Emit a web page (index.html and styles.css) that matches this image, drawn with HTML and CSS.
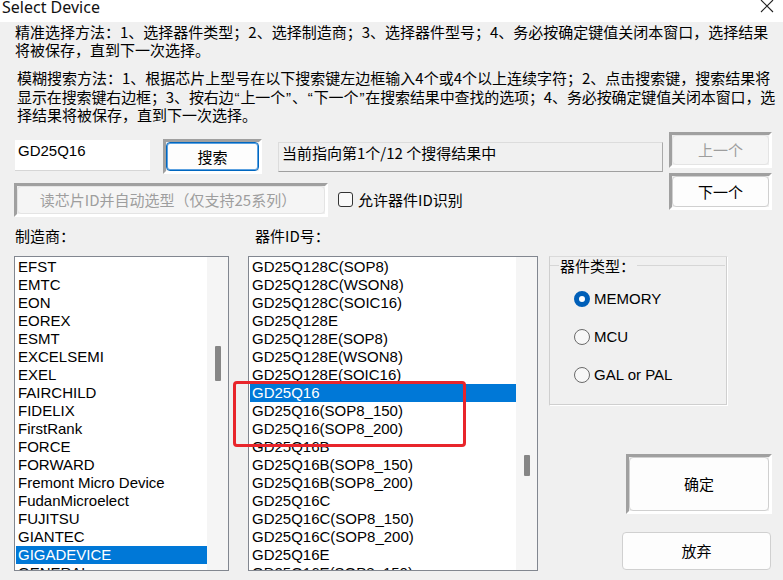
FILE: index.html
```html
<!DOCTYPE html>
<html lang="zh-CN">
<head>
<meta charset="utf-8">
<title>Select Device</title>
<link rel="stylesheet" href="styles.css">
</head>
<body>
<div class="window">
  <div class="titlebar">
    <span class="title">Select Device</span>
    <svg class="close" width="14" height="14" viewBox="0 0 14 14"><path d="M1 1 L13 13 M13 1 L1 13" stroke="#222" stroke-width="1.1" fill="none"/></svg>
  </div>
  <div class="main">
    <p class="intro intro1">
      <span class="line">精准选择方法：1、选择器件类型；2、选择制造商；3、选择器件型号；4、务必按确定键值关闭本窗口，选择结果</span>
      <span class="line">将被保存，直到下一次选择。</span>
    </p>
    <p class="intro intro2">
      <span class="line">模糊搜索方法：1、根据芯片上型号在以下搜索键左边框输入4个或4个以上连续字符；2、点击搜索键，搜索结果将</span>
      <span class="line tight">显示在搜索键右边框；3、按右边<span class="q">“</span>上一个<span class="q">”</span>、<span class="q">“</span>下一个<span class="q">”</span>在搜索结果中查找的选项；4、务必按确定键值关闭本窗口，选</span>
      <span class="line">择结果将被保存，直到下一次选择。</span>
    </p>
    <div class="controls">
      <div class="ctl-left">
        <div class="row-search">
          <div class="textbox">GD25Q16</div>
          <div class="frame frame-search"><button class="btn btn-focus">搜索</button></div>
          <div class="status">当前指向第1个/12 个搜得结果中</div>
        </div>
        <div class="row-read">
          <div class="frame frame-read"><button class="btn btn-disabled">读芯片ID并自动选型（仅支持25系列）</button></div>
          <label class="check"><span class="box"></span><span class="check-text">允许器件ID识别</span></label>
        </div>
      </div>
      <div class="ctl-right">
        <div class="frame frame-prev"><button class="btn btn-disabled">上一个</button></div>
        <div class="frame frame-next"><button class="btn">下一个</button></div>
      </div>
    </div>
    <div class="labels">
      <span class="lbl-maker">制造商：</span>
      <span class="lbl-id">器件ID号：</span>
    </div>
    <div class="lists">
      <div class="listbox list-maker">
        <ul class="items">
          <li>EFST</li>
          <li>EMTC</li>
          <li>EON</li>
          <li>EOREX</li>
          <li>ESMT</li>
          <li>EXCELSEMI</li>
          <li>EXEL</li>
          <li>FAIRCHILD</li>
          <li>FIDELIX</li>
          <li>FirstRank</li>
          <li>FORCE</li>
          <li>FORWARD</li>
          <li>Fremont Micro Device</li>
          <li>FudanMicroelect</li>
          <li>FUJITSU</li>
          <li>GIANTEC</li>
          <li class="sel">GIGADEVICE</li>
          <li>GENERAL</li>
        </ul>
        <div class="scroll"><span class="thumb thumb-maker"></span></div>
      </div>
      <div class="listbox list-id">
        <ul class="items">
          <li>GD25Q128C(SOP8)</li>
          <li>GD25Q128C(WSON8)</li>
          <li>GD25Q128C(SOIC16)</li>
          <li>GD25Q128E</li>
          <li>GD25Q128E(SOP8)</li>
          <li>GD25Q128E(WSON8)</li>
          <li>GD25Q128E(SOIC16)</li>
          <li class="sel">GD25Q16</li>
          <li>GD25Q16(SOP8_150)</li>
          <li>GD25Q16(SOP8_200)</li>
          <li>GD25Q16B</li>
          <li>GD25Q16B(SOP8_150)</li>
          <li>GD25Q16B(SOP8_200)</li>
          <li>GD25Q16C</li>
          <li>GD25Q16C(SOP8_150)</li>
          <li>GD25Q16C(SOP8_200)</li>
          <li>GD25Q16E</li>
          <li>GD25Q16E(SOP8_150)</li>
        </ul>
        <div class="scroll"><span class="thumb thumb-id"></span></div>
      </div>
      <div class="side">
        <div class="typebox">
          <div class="legend"><span class="seg seg-l"></span><span class="legend-text">器件类型：</span><span class="seg seg-r"></span></div>
          <div class="radio"><span class="dot dot-on"></span><span>MEMORY</span></div>
          <div class="radio"><span class="dot"></span><span>MCU</span></div>
          <div class="radio"><span class="dot"></span><span>GAL or PAL</span></div>
        </div>
        <div class="frame frame-ok"><button class="btn">确定</button></div>
        <button class="btn btn-cancel">放弃</button>
      </div>
    </div>
  </div>
  <div class="mark"></div>
</div>
</body>
</html>
```
FILE: styles.css
```css
* { box-sizing: border-box; }
html, body { margin: 0; padding: 0; }
body {
  background: #f0f0f0;
  font-family: "Noto Sans CJK SC", "Liberation Sans", sans-serif;
  font-size: 15px;
  color: #000;
}
.window {
  position: relative;
  width: 783px;
  height: 580px;
  overflow: hidden;
  background: #f0f0f0;
}
.titlebar {
  height: 22px;
  background: #fff;
  display: flex;
  justify-content: space-between;
  align-items: flex-start;
  overflow: hidden;
}
.title {
  font-family: "Noto Sans", "Open Sans", sans-serif;
  font-size: 16px;
  line-height: 16px;
  margin: -1px 0 0 2px;
  color: #111;
}
.close { margin: -1px 9px 0 0; }
.main { padding: 0 0 0 14px; }
.intro {
  margin: 0;
  line-height: 18px;
  white-space: nowrap;
}
.intro .line { display: block; height: 18px; overflow: visible; }
.intro1 { margin-top: 1px; padding-left: 1px; }
.intro2 { margin-top: 10px; padding-left: 3px; line-height: 18.5px; }
.intro2 .line { height: 18.5px; }
.intro .tight { letter-spacing: -0.12px; }
.q { font-family: "Liberation Sans", sans-serif; padding: 0 1px; line-height: 1; }

.controls {
  display: flex;
  gap: 6px;
  margin-top: 7px;
}
.ctl-left { width: 649px; padding-top: 7px; }
.row-search { display: flex; align-items: flex-start; height: 35px; }
.textbox {
  margin: 1px 0 0 1px;
  width: 135px;
  height: 31px;
  background: #fff;
  border-bottom: 1px solid #d6d6d6;
  font-family: "Liberation Sans", Arial, sans-serif;
  font-size: 15px;
  line-height: 22px;
  padding: 0 3px;
}
.frame {
  display: flex;
  border: 3px solid;
  border-color: #a0a0a0 #fff #fff #a0a0a0;
}
.frame-search { margin-left: 13px; width: 99px; height: 35px; }
.status {
  margin: 3px 0 0 16px;
  width: 385px;
  height: 30px;
  border: 1px solid #dcdcdc;
  border-right-color: #a9a9a9;
  border-bottom-color: #a0a0a0;
  padding: 0 3px;
  line-height: 19px;
  white-space: nowrap;
}
.row-read { display: flex; align-items: center; margin-top: 9px; }
.frame-read { width: 314px; height: 34px; }
.check { display: flex; align-items: center; margin-left: 10px; }
.box {
  width: 15px;
  height: 15px;
  border: 1px solid #333;
  border-radius: 3px;
  background: #f9f9f9;
}
.check-text { margin-left: 5px; }
.ctl-right { width: 103px; display: flex; flex-direction: column; gap: 5px; }
.frame-prev { height: 36px; }
.frame-next { height: 37px; }

.btn {
  flex: 1;
  width: 100%;
  height: 100%;
  margin: 0;
  padding: 0;
  font-family: "Noto Sans CJK SC", sans-serif;
  font-size: 15px;
  color: #000;
  background: #fdfdfd;
  border: 1px solid #d0d0d0;
  border-radius: 4px;
}
.btn-focus { border: 1px solid #0067c0; box-shadow: inset 0 0 0 1px #5aa0e0; }
.btn-disabled { background: #f5f5f5; border-color: #e4e4e4; color: #9e9e9e; }
.frame-read .btn { padding-right: 6px; }

.labels {
  display: flex;
  margin-top: 10px;
  line-height: 18px;
  height: 18px;
}
.lbl-maker { width: 241px; padding-left: 1px; }

.lists { display: flex; align-items: flex-start; margin-top: 11px; }
.listbox {
  display: flex;
  height: 315px;
  border: 1px solid #828790;
  background: #fff;
  overflow: hidden;
}
.list-maker { width: 215px; }
.list-id { width: 290px; margin-left: 19px; }
.items {
  list-style: none;
  margin: 0;
  padding: 1px 0 0 1px;
  flex: 1;
  font-family: "Liberation Sans", Arial, sans-serif;
  font-size: 15px;
  white-space: nowrap;
}
.items li { height: 18px; line-height: 18px; padding-left: 2px; }
.items li.sel { background: #0078d7; color: #fff; }
.scroll { width: 21px; background: #f5f5f5; display: flex; justify-content: center; }
.thumb { display: block; width: 6px; background: #868686; border-radius: 1px; }
.thumb-maker { margin-top: 89px; height: 35px; }
.thumb-id { margin-top: 198px; height: 21px; }

.side {
  margin-left: 11px;
  width: 223px;
  display: flex;
  flex-direction: column;
  align-items: flex-start;
}
.typebox {
  width: 179px;
  height: 150px;
  border: 1px solid #dadada;
  border-left-color: #cfcfcf;
  border-bottom-color: #fff;
  border-right-color: #fff;
  box-shadow: inset -1px -1px 0 #cfcfcf;
}
.legend { display: flex; align-items: center; height: 18px; }
.seg { height: 1px; background: #d6d6d6; }
.seg-l { width: 9px; }
.seg-r { flex: 1; margin-right: 2px; }
.legend-text { padding: 0 2px 0 1px; line-height: 18px; }
.radio {
  display: flex;
  align-items: center;
  height: 38px;
  padding-left: 24px;
  font-family: "Liberation Sans", Arial, sans-serif;
  font-size: 15px;
}
.legend + .radio { margin-top: 5px; }
.dot {
  width: 16px;
  height: 16px;
  border-radius: 50%;
  border: 1px solid #6a6a6a;
  background: #f7f7f7;
  margin-right: 4px;
}
.dot-on { border: 5px solid #005fb8; background: #fff; }
.frame-ok { margin: 48px 0 0 77px; width: 146px; height: 60px; }
.btn-cancel { flex: none; margin: 18px 0 0 73px; width: 149px; height: 38px; }

.mark {
  position: absolute;
  left: 233px;
  top: 381px;
  width: 233px;
  height: 66px;
  border: 3px solid #e8252b;
  border-radius: 4px;
}
```
